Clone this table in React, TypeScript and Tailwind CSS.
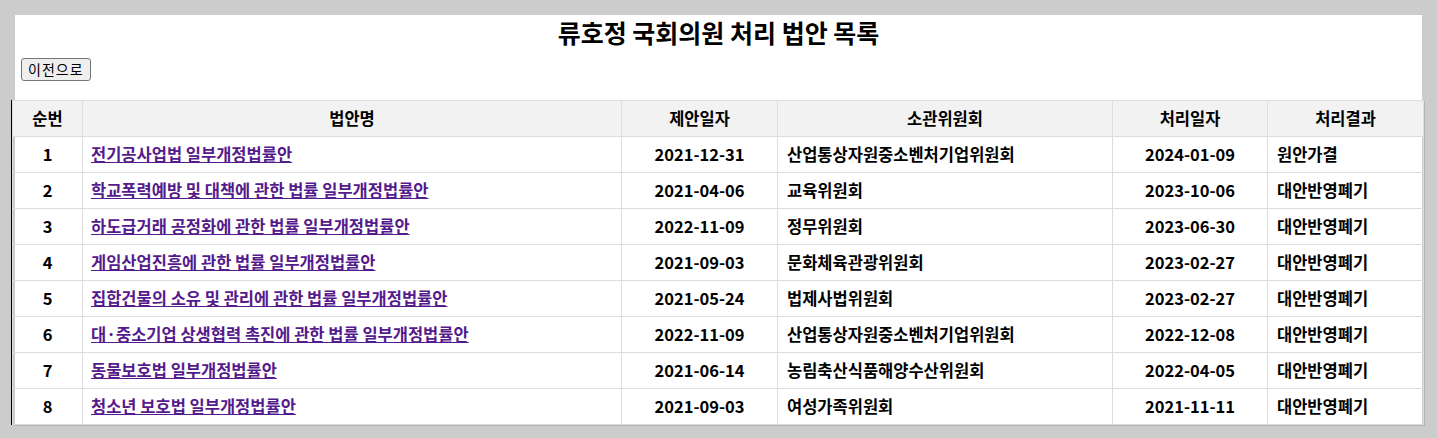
const bills = [
  { no: 1, name: "전기공사업법 일부개정법률안", proposed: "2021-12-31", committee: "산업통상자원중소벤처기업위원회", processed: "2024-01-09", result: "원안가결" },
  { no: 2, name: "학교폭력예방 및 대책에 관한 법률 일부개정법률안", proposed: "2021-04-06", committee: "교육위원회", processed: "2023-10-06", result: "대안반영폐기" },
  { no: 3, name: "하도급거래 공정화에 관한 법률 일부개정법률안", proposed: "2022-11-09", committee: "정무위원회", processed: "2023-06-30", result: "대안반영폐기" },
  { no: 4, name: "게임산업진흥에 관한 법률 일부개정법률안", proposed: "2021-09-03", committee: "문화체육관광위원회", processed: "2023-02-27", result: "대안반영폐기" },
  { no: 5, name: "집합건물의 소유 및 관리에 관한 법률 일부개정법률안", proposed: "2021-05-24", committee: "법제사법위원회", processed: "2023-02-27", result: "대안반영폐기" },
  { no: 6, name: "대·중소기업 상생협력 촉진에 관한 법률 일부개정법률안", proposed: "2022-11-09", committee: "산업통상자원중소벤처기업위원회", processed: "2022-12-08", result: "대안반영폐기" },
  { no: 7, name: "동물보호법 일부개정법률안", proposed: "2021-06-14", committee: "농림축산식품해양수산위원회", processed: "2022-04-05", result: "대안반영폐기" },
  { no: 8, name: "청소년 보호법 일부개정법률안", proposed: "2021-09-03", committee: "여성가족위원회", processed: "2021-11-11", result: "대안반영폐기" },
]

const cell = "border border-[#dddddd] h-[36px] p-0"

export default function App() {
  return (
    <div
      className="min-h-[438px] bg-[#cccccc] pt-[15px] pl-[15px] text-black"
      style={{ fontFamily: '"Noto Sans CJK KR", "Noto Sans", sans-serif' }}
    >
      <div className="w-[1407px] bg-white">
        <h1 className="text-center text-[25px] font-bold leading-[34px]">
          류호정 국회의원 처리 법안 목록
        </h1>
        <div className="mt-[7px] pl-[6px]">
          <button className="h-[23px] rounded-[3px] border border-[#767676] bg-[#efefef] px-[6px] text-[14px] leading-none tracking-[1px]">
            이전으로
          </button>
        </div>
        <div className="mt-[19px] -ml-[4px] w-[1412px] border-l border-black">
          <table className="w-[1411px] table-fixed border-collapse text-[16.5px] font-bold shadow-[1px_1px_0_#b3b3b3]">
            <colgroup>
              <col className="w-[70px]" />
              <col className="w-[539px]" />
              <col className="w-[156px]" />
              <col className="w-[335px]" />
              <col className="w-[155px]" />
              <col className="w-[156px]" />
            </colgroup>
            <thead>
              <tr className="bg-[#f2f2f2]">
                <th className={cell}>순번</th>
                <th className={cell}>법안명</th>
                <th className={cell}>제안일자</th>
                <th className={cell}>소관위원회</th>
                <th className={cell}>처리일자</th>
                <th className={cell}>처리결과</th>
              </tr>
            </thead>
            <tbody>
              {bills.map((b) => (
                <tr key={b.no}>
                  <td className={`${cell} text-center`}>{b.no}</td>
                  <td className={`${cell} px-2`}>
                    <a href="#" className="text-[#551a8b] underline">
                      {b.name}
                    </a>
                  </td>
                  <td className={`${cell} text-center`}>{b.proposed}</td>
                  <td className={`${cell} px-[9px]`}>{b.committee}</td>
                  <td className={`${cell} text-center`}>{b.processed}</td>
                  <td className={`${cell} px-[9px]`}>{b.result}</td>
                </tr>
              ))}
            </tbody>
          </table>
        </div>
      </div>
    </div>
  )
}
